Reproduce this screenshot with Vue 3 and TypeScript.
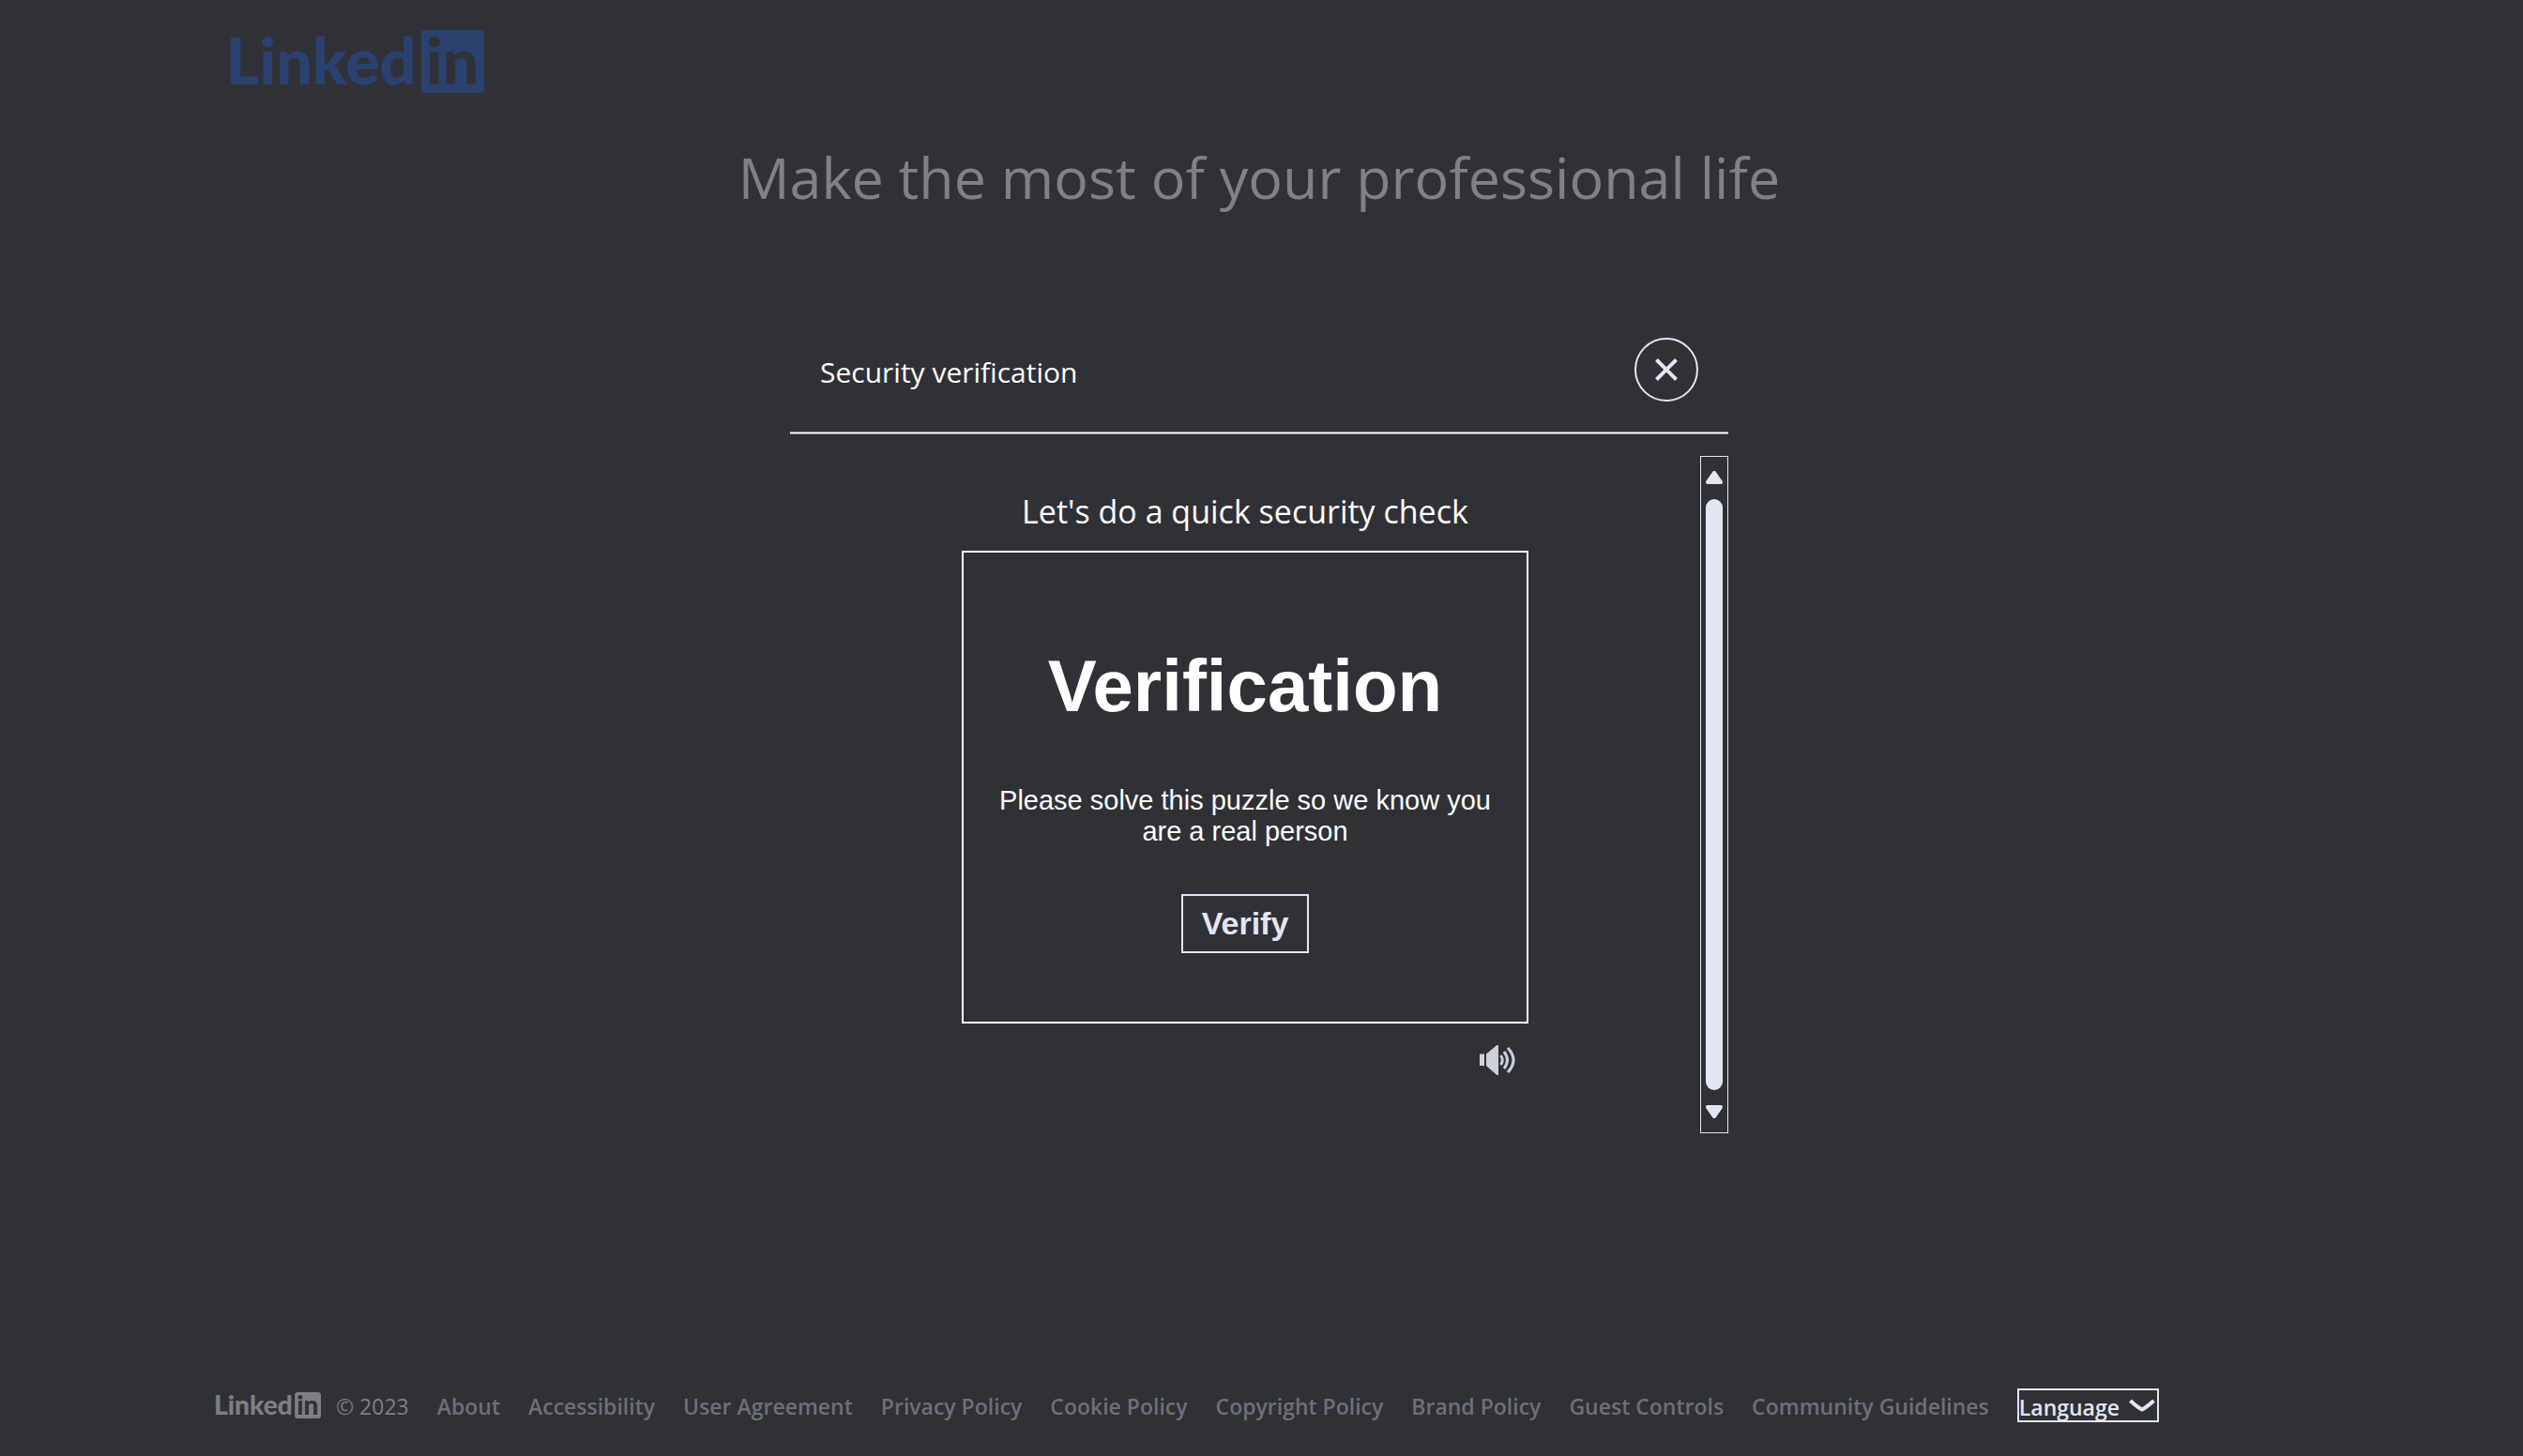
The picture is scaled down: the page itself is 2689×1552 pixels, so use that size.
<script setup lang="ts">
import { ref } from 'vue'

const links: string[] = [
  'About',
  'Accessibility',
  'User Agreement',
  'Privacy Policy',
  'Cookie Policy',
  'Copyright Policy',
  'Brand Policy',
  'Guest Controls',
  'Community Guidelines',
]

const language = ref('Language')
</script>

<template>
  <div class="page">
    <header class="site-header">
      <a href="#" class="brand" aria-label="LinkedIn">
        <svg class="logo" viewBox="0 0 270 67" aria-hidden="true">
          <text class="logo-text" x="-5" y="58">Linked</text>
          <rect x="203" width="67" height="67" rx="4" />
          <text class="logo-text cut" x="208" y="58">in</text>
        </svg>
      </a>
    </header>

    <main>
      <h1 class="tagline">Make the most of your professional life</h1>

      <section class="dialog" role="dialog" aria-labelledby="dialog-title">
        <div class="dialog-head">
          <h2 id="dialog-title" class="dialog-title">Security verification</h2>
          <button type="button" class="close" aria-label="Close">
            <svg viewBox="0 0 24 24" aria-hidden="true">
              <path d="M1.5 1.5 22.5 22.5M22.5 1.5 1.5 22.5" />
            </svg>
          </button>
        </div>
        <div class="rule"></div>

        <div class="dialog-body">
          <div id="challenge" class="challenge">
            <p class="lead">Let's do a quick security check</p>
            <div class="card">
              <h3 class="card-title">Verification</h3>
              <p class="card-text">Please solve this puzzle so we know you are a real person</p>
              <button type="button" class="verify">Verify</button>
            </div>
            <button type="button" class="audio" aria-label="Audio challenge">
              <svg viewBox="0 0 38 32" aria-hidden="true">
                <path class="solid" d="M0 9.5h5v12.500H0zM7 9.500 18.500 0h1.500v32h-1.500L7 22z" />
                <path class="wave" d="M22.500 11q3.500 5 0 10M26 7q7 9 0 18M30 3q12 13 0 26" />
              </svg>
            </button>
          </div>

          <div
            class="scrollbar"
            role="scrollbar"
            aria-controls="challenge"
            aria-orientation="vertical"
            aria-valuenow="0"
            aria-valuemin="0"
            aria-valuemax="100"
          >
            <svg class="arrow" viewBox="0 0 18 14" aria-hidden="true">
              <path d="M9 2 16 12H2z" />
            </svg>
            <div class="thumb"></div>
            <svg class="arrow" viewBox="0 0 18 14" aria-hidden="true">
              <path d="M9 12 2 2h14z" />
            </svg>
          </div>
        </div>
      </section>
    </main>

    <footer class="site-footer">
      <div class="legal">
        <svg class="logo small" viewBox="0 0 270 67" role="img" aria-label="LinkedIn">
          <text class="logo-text" x="-5" y="58">Linked</text>
          <rect x="203" width="67" height="67" rx="7" />
          <text class="logo-text cut" x="208" y="58">in</text>
        </svg>
        <span class="footer-text">© 2023</span>
      </div>
      <a v-for="link in links" :key="link" href="#" class="footer-link footer-text">{{ link }}</a>
      <div class="language">
        <select v-model="language" aria-label="Language">
          <option>Language</option>
        </select>
        <svg viewBox="0 0 28 14" aria-hidden="true">
          <path d="M1.500 2 Q9 9 14 11.500 Q19 9 26.500 2" />
        </svg>
      </div>
    </footer>
  </div>
</template>

<style>
body {
  margin: 0;
  background: #303136;
}
</style>

<style scoped>
.page {
  --bg: #303136;
  --control: #e3e5f2;
  box-sizing: border-box;
  min-height: 100vh;
  display: flex;
  flex-direction: column;
  background: var(--bg);
  color: #fff;
  font-family: "Open Sans", "Noto Sans", sans-serif;
}

h1,
h2,
h3,
p {
  margin: 0;
  font-weight: 400;
}

button {
  padding: 0;
  background: none;
  color: var(--control);
  border: 0;
  cursor: pointer;
}

svg {
  display: block;
}

.site-header {
  padding: 32px 246px 0;
}

.brand {
  display: inline-block;
  vertical-align: top;
  color: #2a4170;
}

.logo {
  width: 270px;
  height: 67px;
  fill: currentColor;
  overflow: visible;
}

.logo.small {
  width: 112px;
  height: 28px;
}

.logo-text {
  font: 900 68px Lato, sans-serif;
}

.logo .cut {
  fill: var(--bg);
}

main {
  padding-right: 5px;
}

.tagline {
  margin-top: 48px;
  color: #808184;
  font-size: 61px;
  line-height: 84px;
  text-align: center;
}

.dialog {
  max-width: 1000px;
  margin: 97px auto 0;
}

.dialog-head {
  display: flex;
  align-items: center;
  justify-content: space-between;
  padding: 32px;
}

.dialog-title {
  padding-top: 5px;
  font-size: 30px;
  line-height: 40px;
}

.close {
  box-sizing: border-box;
  width: 68px;
  height: 68px;
  display: grid;
  place-items: center;
  border: 2px solid var(--control);
  border-radius: 50%;
}

.close svg {
  width: 24px;
  height: 24px;
  fill: none;
  stroke: currentColor;
  stroke-width: 4;
}

.rule {
  height: 1px;
  background: #fff;
  border: solid #97989a;
  border-width: 1px 0;
}

.dialog-body {
  display: flex;
  min-height: 722px;
  margin-top: 23px;
}

.challenge {
  flex: 1;
  display: flex;
  flex-direction: column;
  align-items: center;
  padding-top: 35px;
}

.lead {
  font-size: 34px;
  line-height: 48px;
}

.card {
  box-sizing: border-box;
  width: 604px;
  display: flex;
  flex-direction: column;
  align-items: center;
  margin-top: 18px;
  padding: 97px 30px 73px;
  border: 2px solid #fff;
  font-family: "Liberation Sans", Arial, sans-serif;
  text-align: center;
}

.card-title {
  font-size: 78px;
  font-weight: 700;
  line-height: 90px;
}

.card-text {
  margin-top: 61px;
  font-size: 29px;
  line-height: 33px;
}

.verify {
  box-sizing: border-box;
  width: 136px;
  height: 63px;
  margin-top: 50px;
  border: 2px solid var(--control);
  font: 700 34px "Liberation Sans", Arial, sans-serif;
}

.audio {
  width: 604px;
  margin-top: 23px;
  padding-right: 14px;
  display: flex;
  justify-content: flex-end;
  box-sizing: border-box;
  color: #cdcfdf;
}

.audio svg {
  width: 38px;
  height: 32px;
}

.audio .solid {
  fill: currentColor;
}

.audio .wave {
  fill: none;
  stroke: currentColor;
  stroke-width: 3;
}

.scrollbar {
  box-sizing: border-box;
  width: 30px;
  display: flex;
  flex-direction: column;
  align-items: center;
  gap: 16px;
  padding: 15px 0;
  border: 1px solid var(--control);
}

.arrow {
  width: 18px;
  height: 14px;
  fill: var(--control);
  stroke: var(--control);
  stroke-width: 4;
  stroke-linejoin: round;
}

.thumb {
  flex: 1;
  width: 18px;
  border-radius: 9px;
  background: var(--control);
}

.site-footer {
  display: flex;
  align-items: center;
  gap: 30px;
  margin-top: auto;
  padding: 32px 230px 36px;
  font-size: 23px;
  line-height: 34px;
  white-space: nowrap;
}

.legal {
  display: flex;
  align-items: center;
  gap: 16px;
  color: #7d7f84;
}

.footer-text {
  padding-top: 2px;
}

.footer-link {
  color: #6e707a;
  font-weight: 600;
  text-decoration: none;
}

.language {
  position: relative;
  color: var(--control);
}

.language select {
  box-sizing: border-box;
  display: block;
  width: 151px;
  height: 36px;
  padding: 2px 0 0;
  appearance: none;
  border: 2px solid var(--control);
  border-radius: 0;
  background: transparent;
  color: inherit;
  font: 600 23px "Open Sans", "Noto Sans", sans-serif;
}

.language svg {
  position: absolute;
  top: 11px;
  right: 4px;
  width: 28px;
  height: 14px;
  fill: none;
  stroke: currentColor;
  stroke-width: 4;
  pointer-events: none;
}
</style>
